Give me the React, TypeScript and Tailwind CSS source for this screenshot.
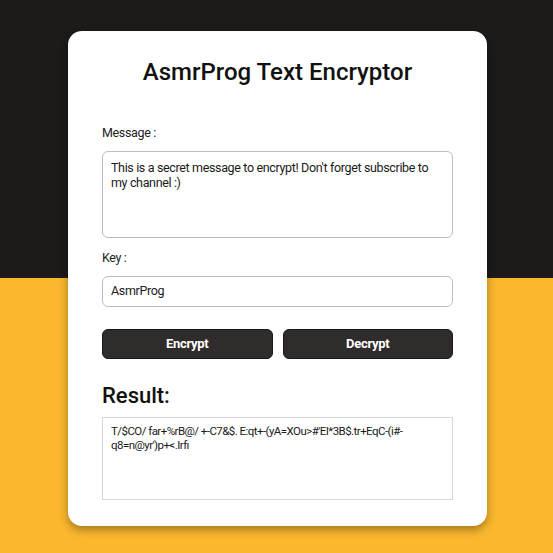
import React from "react";

export default function App() {
  return (
    <div
      className="relative w-[553px] h-[553px] overflow-hidden bg-[linear-gradient(to_bottom,#1d1a1a_0,#1d1a1a_278px,#fbb82e_278px,#fbb82e_100%)]"
      style={{ fontFamily: "Roboto, 'Liberation Sans', sans-serif" }}
    >
      <div className="absolute left-[68px] top-[31px] w-[419px] h-[495px] bg-white rounded-[14px] shadow-[0_4px_10px_rgba(0,0,0,0.35)] px-[34px] pt-[27px]">
        <h1 className="text-center text-[24px] leading-[28px] font-medium text-[#111]">
          AsmrProg Text Encryptor
        </h1>

        <label className="block mt-[39px] text-[12.5px] leading-[16px] tracking-[-0.35px] text-[#222]">Message :</label>
        <div className="mt-[10px] h-[87px] rounded-[6px] border border-[#bdbdbd] px-[8px] pt-[8px] text-[12.5px] leading-[15px] tracking-[-0.35px] text-[#1a1a1a]">
          This is a secret message to encrypt! Don't forget subscribe to
          <br />
          my channel :)
        </div>

        <label className="block mt-[12px] text-[12.5px] leading-[16px] tracking-[-0.35px] text-[#222]">Key :</label>
        <div className="mt-[10px] h-[31px] rounded-[6px] border border-[#bdbdbd] px-[8px] flex items-center text-[12.5px] tracking-[-0.35px] text-[#1a1a1a]">
          AsmrProg
        </div>

        <div className="mt-[22px] grid grid-cols-2 gap-[10px]">
          <button className="h-[30px] rounded-[6px] bg-[#302c2b] border border-[#1a1717] text-white text-[13px] font-bold tracking-[-0.3px]">
            Encrypt
          </button>
          <button className="h-[30px] rounded-[6px] bg-[#302c2b] border border-[#1a1717] text-white text-[13px] font-bold tracking-[-0.3px]">
            Decrypt
          </button>
        </div>

        <h2 className="mt-[24px] text-[22px] leading-[26px] font-medium text-[#111]">Result:</h2>
        <div className="mt-[8px] h-[83px] border border-[#d6d6d6] px-[8px] pt-[6px] text-[11.5px] leading-[14px] tracking-[-0.55px] text-[#1a1a1a] whitespace-nowrap">
          T/$CO/ far+%rB@/ +-C7&amp;$. E:qt+-(yA=XOu&gt;#'EI*3B$.tr+EqC-(i#-
          <br />
          q8=n@yr')p+&lt;.Irfı
        </div>
      </div>
    </div>
  );
}
